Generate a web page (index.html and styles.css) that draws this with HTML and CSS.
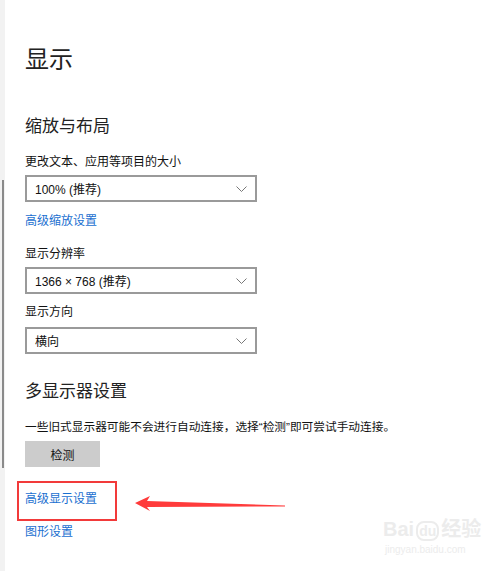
FILE: index.html
```html
<!DOCTYPE html>
<html lang="zh-CN">
<head>
    <meta charset="UTF-8">
    <title>显示</title>
    <link rel="stylesheet" href="styles.css">
</head>
<body>
    <div class="rail"><div class="thumb"></div></div>

    <div class="main">
        <h1 class="title">显示</h1>

        <h2 class="section">缩放与布局</h2>
        <div class="label">更改文本、应用等项目的大小</div>
        <div class="select">
            <span>100% (推荐)</span>
            <svg class="chev" width="11" height="6" viewBox="0 0 11 6"><path d="M0.5 0.5 L5.5 5.5 L10.5 0.5" fill="none" stroke="#777" stroke-width="1"/></svg>
        </div>
        <div class="link first-link">高级缩放设置</div>

        <div class="label gap-md">显示分辨率</div>
        <div class="select">
            <span>1366 × 768 (推荐)</span>
            <svg class="chev" width="11" height="6" viewBox="0 0 11 6"><path d="M0.5 0.5 L5.5 5.5 L10.5 0.5" fill="none" stroke="#777" stroke-width="1"/></svg>
        </div>

        <div class="label gap-sm">显示方向</div>
        <div class="select select-last">
            <span>横向</span>
            <svg class="chev" width="11" height="6" viewBox="0 0 11 6"><path d="M0.5 0.5 L5.5 5.5 L10.5 0.5" fill="none" stroke="#777" stroke-width="1"/></svg>
        </div>

        <h2 class="section section-2">多显示器设置</h2>
        <div class="label para">一些旧式显示器可能不会进行自动连接，选择“检测”即可尝试手动连接。</div>
        <div class="btn">检测</div>

        <div class="mark">
            <div class="link">高级显示设置</div>
        </div>
        <div class="link last-link">图形设置</div>
    </div>

    <svg class="arrow" width="160" height="20" viewBox="130 494 160 20">
        <polygon points="135,503 150,496 147,501 285,505.5 285,506.5 147,507 150,511" fill="#ff3b3b"/>
    </svg>

    <div class="watermark">
        <div class="wm-logo">Bai<span class="wm-du">du</span>经验</div>
        <div class="wm-url">jingyan.baidu.com</div>
    </div>
</body>
</html>
```

FILE: styles.css
```css
html, body {
    margin: 0;
    height: 100%;
}
body {
    display: flex;
    background: #fff;
    font-family: "Liberation Sans", "Noto Sans CJK SC", sans-serif;
    color: #111;
    overflow: hidden;
}
.rail {
    width: 5px;
    flex: none;
    background: #f2f2f2;
}
.thumb {
    margin: 180px 0 0 2px;
    width: 2px;
    height: 288px;
    background: #8a8a8a;
}
.main {
    padding-left: 20px;
    flex: 1;
}
.title {
    margin: 45px 0 0;
    font-size: 24px;
    line-height: 30px;
    font-weight: normal;
    color: #222;
}
.section {
    margin: 40px 0 0;
    font-size: 17px;
    line-height: 24px;
    font-weight: normal;
    color: #222;
}
.section-2 {
    margin-top: 26px;
}
.label {
    margin-top: 14px;
    font-size: 12px;
    line-height: 18px;
}
.gap-md {
    margin-top: 15px;
}
.gap-sm {
    margin-top: 9px;
}
.para {
    margin-top: 14px;
    font-size: 11.7px;
}
.select {
    margin-top: 4px;
    width: 232px;
    height: 27px;
    box-sizing: border-box;
    border: 2px solid #9a9a9a;
    display: flex;
    align-items: center;
    justify-content: space-between;
    padding: 0 8px 0 8px;
    font-size: 12px;
    color: #111;
}
.select-last {
    margin-top: 6px;
}
.link {
    font-size: 12px;
    line-height: 18px;
    color: #1a6fd0;
}
.first-link {
    margin-top: 10px;
}
.btn {
    margin-top: 5px;
    width: 75px;
    height: 26px;
    background: #cccccc;
    display: flex;
    align-items: center;
    justify-content: center;
    font-size: 12px;
    color: #111;
}
.mark {
    margin: 14px 0 0 -8px;
    width: 100px;
    height: 40px;
    box-sizing: border-box;
    border: 2px solid #f23a3a;
    padding: 7px 0 0 6px;
}
.last-link {
    margin-top: 2px;
}
.arrow {
    position: absolute;
    left: 130px;
    top: 494px;
}
.watermark {
    position: absolute;
    left: 383px;
    top: 516px;
    color: #ececec;
    font-family: "Liberation Sans", "Noto Sans CJK SC", sans-serif;
}
.wm-logo {
    font-size: 20px;
    font-weight: bold;
    line-height: 26px;
}
.wm-du {
    font-size: 14px;
    border: 2px solid #ececec;
    border-radius: 8px;
    padding: 0 1px;
    margin: 0 2px;
}
.wm-url {
    font-size: 10px;
    line-height: 12px;
    padding-left: 2px;
}
```
